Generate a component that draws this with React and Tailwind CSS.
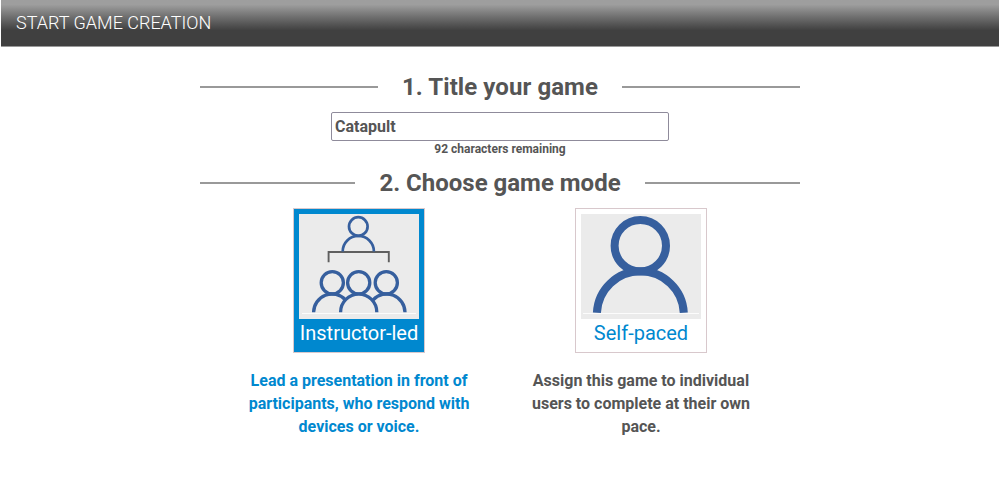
function SectionTitle({ children, className = "" }) {
  return (
    <h2 className={"flex h-8 w-[600px] items-center gap-6 text-2xl font-bold text-[#555] " + className}>
      <span className="h-0.5 flex-1 bg-[#999]" />
      {children}
      <span className="h-0.5 flex-1 bg-[#999]" />
    </h2>
  );
}

function InstructorIcon() {
  return (
    <svg width="120" height="105" viewBox="0 0 120 105" fill="none" className="block bg-[#ebebeb]">
      <path d="M29.6 48.3V38H89.8V48.3" stroke="#5f5f5f" strokeWidth="1.9" />
      <g stroke="#365f9e" strokeWidth="2.7">
        <circle cx="59.3" cy="12.5" r="9.3" />
        <path d="M43.7 37.5a15.6 15.6 0 0 1 31.2 0" />
      </g>
      <g stroke="#365f9e" strokeWidth="3.3">
        <circle cx="33.3" cy="68.8" r="11.1" />
        <path d="M14.6 98.2a18.4 18.4 0 0 1 31.8 -12.4" />
        <circle cx="87.3" cy="68.8" r="11.1" />
        <path d="M106 98.2a18.4 18.4 0 0 0 -31.8 -12.4" />
        <circle cx="59.7" cy="68.8" r="11.1" />
        <path d="M41.6 98.2a18.1 18.1 0 0 1 36.2 0" fill="#ebebeb" />
      </g>
      <path d="M3 99.5H117" stroke="#fcfcfc" />
    </svg>
  );
}

function PersonIcon() {
  return (
    <svg width="120" height="105" viewBox="0 0 120 105" fill="none" className="block bg-[#ebebeb]">
      <g stroke="#365f9e" strokeWidth="8">
        <circle cx="59.3" cy="31.7" r="25.7" />
        <path d="M15.9 98.7A43.5 43.5 0 0 1 102.8 98.7" />
      </g>
      <path d="M2 99.5H118" stroke="#fcfcfc" />
    </svg>
  );
}

function GameMode({ icon, label, selected, children }) {
  return (
    <div className="flex w-[228px] flex-col items-center">
      <button
        className={
          "h-[145px] w-[132px] border border-[#d8c8cc] p-[5px] text-xl leading-[28px] " +
          (selected ? "bg-[#0088cf] text-white" : "bg-white text-[#0088cf]")
        }
      >
        {icon}
        <span className="block whitespace-nowrap">{label}</span>
      </button>
      <p
        className={
          "mt-4 text-center text-base leading-[23px] font-bold " +
          (selected ? "text-[#0088cf]" : "text-[#555]")
        }
      >
        {children}
      </p>
    </div>
  );
}

export default function App() {
  return (
    <div className="h-[493px] overflow-hidden bg-white font-['Roboto',sans-serif]">
      <header className="mx-px flex h-[47px] items-center border-b border-[#999] bg-linear-to-b from-[#9e9e9e] from-10% to-[#404040] to-66% pl-[15px]">
        <h1 className="text-lg font-light text-white">START GAME CREATION</h1>
      </header>
      <main className="flex flex-col items-center pt-6">
        <SectionTitle className="tracking-[0.08px]">1. Title your game</SectionTitle>
        <input
          defaultValue="Catapult"
          aria-label="Game title"
          className="mt-[9px] h-[29px] w-[338px] rounded-[2px] border border-[#8f8b9b] px-[3px] text-base font-bold text-[#555] outline-none"
        />
        <p className="h-4 text-xs leading-4 font-bold text-[#555]">92 characters remaining</p>
        <div className="mt-2.5">
          <SectionTitle>2. Choose game mode</SectionTitle>
        </div>
        <div className="mt-[9px] flex gap-[54px]">
          <GameMode icon={<InstructorIcon />} label="Instructor-led" selected>
            Lead a presentation in front of participants, who respond with devices or voice.
          </GameMode>
          <GameMode icon={<PersonIcon />} label="Self-paced">
            Assign this game to individual users to complete at their own pace.
          </GameMode>
        </div>
      </main>
    </div>
  );
}
